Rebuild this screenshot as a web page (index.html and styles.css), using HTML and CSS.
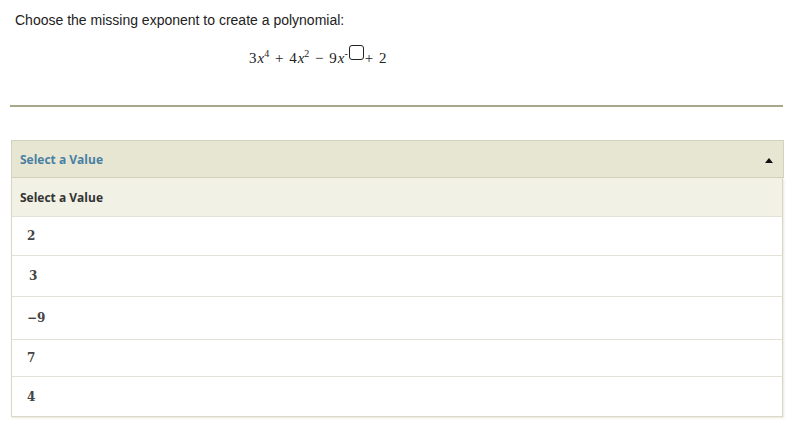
FILE: index.html
```html
<!DOCTYPE html>
<html>
<head>
<meta charset="utf-8">
<link rel="stylesheet" href="styles.css">
</head>
<body>
<div class="page">
  <p class="prompt">Choose the missing exponent to create a polynomial:</p>
  <div class="formula">
    <span>3<i>x</i><sup>4</sup> + 4<i>x</i><sup>2</sup> − 9<i>x</i><sup class="neg">-<span class="blank"></span></sup>+ 2</span>
  </div>
  <hr class="rule">
  <div class="select">
    <div class="select-head">
      <span class="head-label">Select a Value</span>
      <span class="caret"></span>
    </div>
    <ul class="options">
      <li class="opt placeholder">Select a Value</li>
      <li class="opt num">2</li>
      <li class="opt num">3</li>
      <li class="opt num">−9</li>
      <li class="opt num">7</li>
      <li class="opt num">4</li>
    </ul>
  </div>
</div>
</body>
</html>
```

FILE: styles.css
```css
* { box-sizing: border-box; }
html, body { margin: 0; padding: 0; background: #fff; }
.page {
  width: 800px;
  height: 422px;
  padding: 11px 17px 0 11px;
  overflow: hidden;
}
.prompt {
  margin: 0 0 0 4px;
  font-family: "Liberation Sans", Arial, sans-serif;
  font-size: 14px;
  line-height: 18px;
  color: #222;
}
.formula {
  display: flex;
  justify-content: flex-start;
  padding-left: 238px;
  margin-top: 16px;
  font-family: "Liberation Serif", serif;
  font-size: 15px;
  line-height: 18px;
  word-spacing: 2px;
  color: #222;
}
.formula i { font-style: italic; margin-left: 1px; }
.formula sup { font-size: 10px; vertical-align: 6px; line-height: 0; }
.formula sup.neg { margin-right: 1px; }
.blank {
  display: inline-block;
  width: 15px;
  height: 15px;
  border: 1.5px solid #222;
  border-radius: 3px;
  margin-left: 1px;
  vertical-align: -3px;
}
.rule {
  margin: 38px 0 0 -1px;
  border: 0;
  height: 2px;
  background: #a9a78a;
}
.select {
  margin-top: 33px;
  margin-right: -1px;
}
.select-head {
  display: flex;
  align-items: center;
  justify-content: space-between;
  height: 38px;
  padding: 0 10px 0 8px;
  background: #e6e6d3;
  border: 1px solid #d3d2bb;
  font-family: "Open Sans", sans-serif;
  font-size: 12px;
  font-weight: 700;
  color: #4a7fa3;
}
.caret {
  width: 0;
  height: 0;
  border-left: 4px solid transparent;
  border-right: 4px solid transparent;
  border-bottom: 5px solid #111;
  margin-top: 2px;
}
.options {
  list-style: none;
  margin: 0 1px 0 0;
  padding: 0;
  border: 1px solid #d9d8c6;
  border-top: 0;
  box-shadow: 1px 1px 2px rgba(180, 180, 150, 0.35);
}
.opt {
  display: flex;
  align-items: center;
  height: 39px;
  border-top: 1px solid #e3e2d4;
  color: #333;
}
.opt:first-child { border-top: 0; height: 38px; }
.placeholder {
  background: #f1f1e5;
  padding-left: 8px;
  font-family: "Open Sans", sans-serif;
  font-size: 12px;
  font-weight: 700;
  color: #333;
}
.num {
  padding-left: 15px;
  font-family: "DejaVu Serif", serif;
  font-size: 12px;
  font-weight: 600;
  color: #444;
}
.opt:nth-child(3) { height: 41px; padding-left: 17px; }
.opt:nth-child(4) { height: 43px; }
.opt:nth-child(5) { height: 37px; }
.opt:nth-child(6) { height: 40px; }
```
